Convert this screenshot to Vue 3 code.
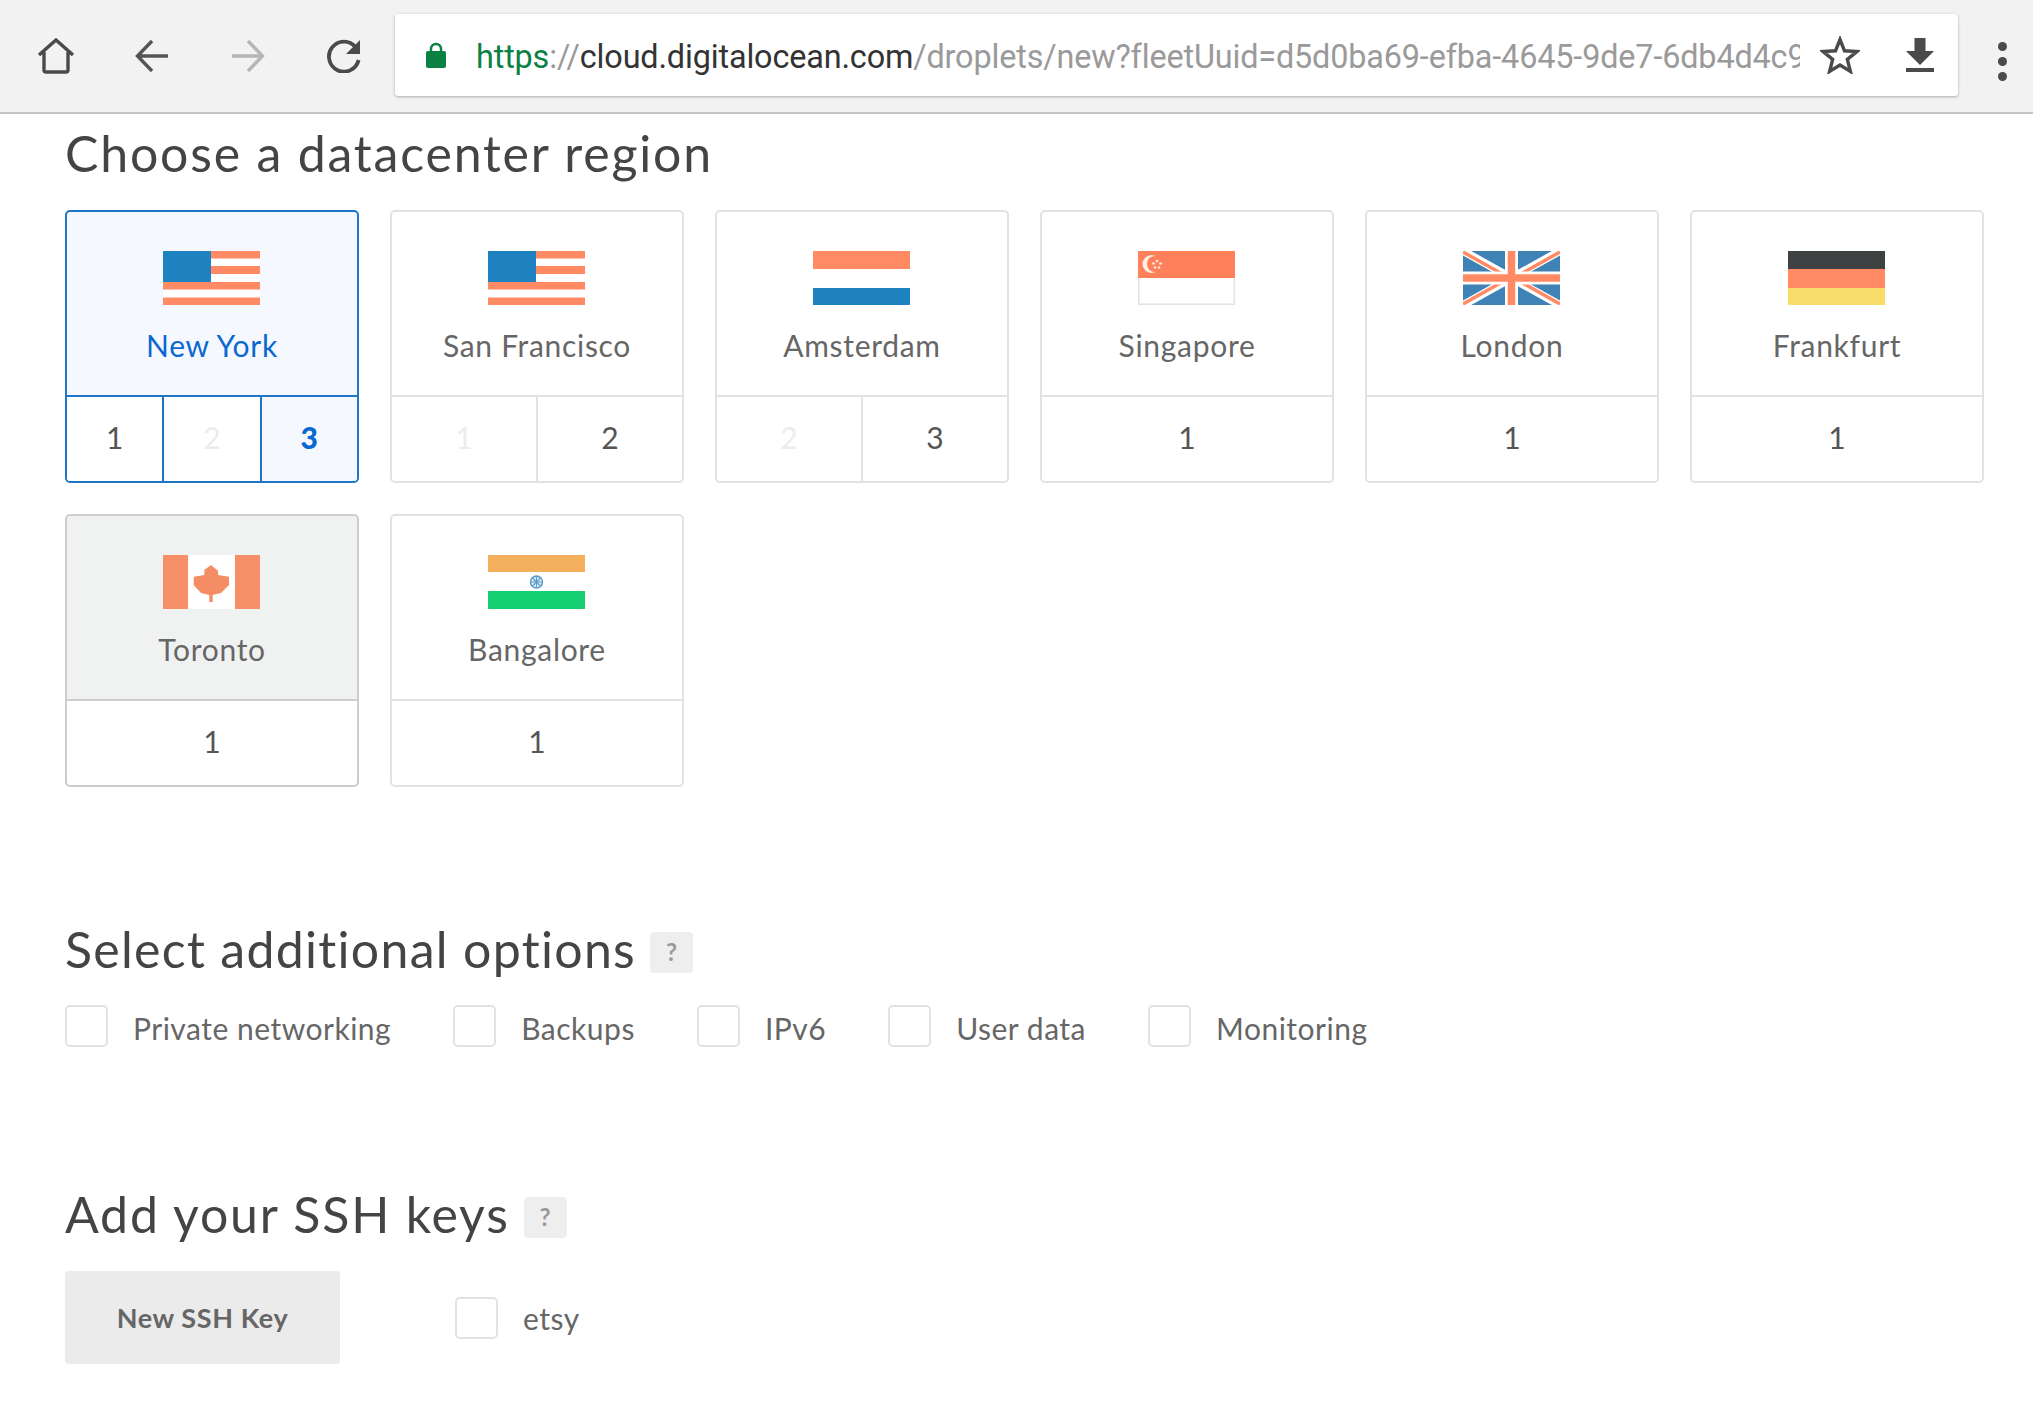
<script setup>
const regions = [
  { name: 'New York', flag: 'us', state: 'selected', cells: [{ n: 1 }, { n: 2, off: true }, { n: 3, on: true }] },
  { name: 'San Francisco', flag: 'us', cells: [{ n: 1, off: true }, { n: 2 }] },
  { name: 'Amsterdam', flag: 'nl', cells: [{ n: 2, off: true }, { n: 3 }] },
  { name: 'Singapore', flag: 'sg', cells: [{ n: 1 }] },
  { name: 'London', flag: 'uk', cells: [{ n: 1 }] },
  { name: 'Frankfurt', flag: 'de', cells: [{ n: 1 }] },
  { name: 'Toronto', flag: 'ca', state: 'hover', cells: [{ n: 1 }] },
  { name: 'Bangalore', flag: 'in', cells: [{ n: 1 }] }
]
const options = ['Private networking', 'Backups', 'IPv6', 'User data', 'Monitoring']
const spokes = [0, 45, 90, 135]
</script>

<template>
  <div class="page">
    <header class="toolbar">
      <button class="tool">
        <svg width="38" height="36" viewBox="0 0 38 36"><path d="M2 17 19 2l17 15M7 14v18a2 2 0 0 0 2 2h20a2 2 0 0 0 2-2V14" fill="none" stroke="#4a4a4a" stroke-width="3.4"/></svg>
      </button>
      <button class="tool">
        <svg width="34" height="34" viewBox="0 0 34 34"><path d="M33 17H4M17 2 2.500 17 17 32" fill="none" stroke="#555" stroke-width="3.4"/></svg>
      </button>
      <button class="tool">
        <svg width="34" height="34" viewBox="0 0 34 34"><path d="M1 17h29M17 2l14.500 15L17 32" fill="none" stroke="#b5b5b5" stroke-width="3.4"/></svg>
      </button>
      <button class="tool">
        <svg width="34" height="34" viewBox="0 0 34 34"><path d="M28.500 8A15 15 0 1 0 31.600 21" fill="none" stroke="#4a4a4a" stroke-width="3.8"/><path d="M33 1v14H19z" fill="#4a4a4a"/></svg>
      </button>
      <div class="omnibox">
        <svg class="lock" width="20" height="26" viewBox="0 0 20 26"><path d="M5 10V7a5 5 0 0 1 10 0v3" fill="none" stroke="#0b8043" stroke-width="2.400"/><rect y="9" width="20" height="17" rx="2" fill="#0b8043"/></svg>
        <div class="url"><span class="scheme">https</span><span class="faint">://</span><span class="host">cloud.digitalocean.com</span><span class="faint">/droplets/new?fleetUuid=d5d0ba69-efba-4645-9de7-6db4d4c9</span></div>
        <svg class="star" width="40" height="38" viewBox="0 0 40 38"><path d="M20 3.500 24.500 14.800l12.300.8-9.500 7.800 3.100 12L20 29l-10.400 6.400 3.100-12-9.500-7.800 12.300-.8z" fill="none" stroke="#4a4a4a" stroke-width="3.400"/></svg>
        <svg class="download" width="28" height="34" viewBox="0 0 28 34"><path d="M8.500 0h11v13H28L14 27 0 13h8.500z" fill="#4a4a4a"/><rect y="30" width="28" height="4" fill="#4a4a4a"/></svg>
      </div>
      <div class="dots"><i></i><i></i><i></i></div>
    </header>

    <main class="content">
      <h2 class="title first">Choose a datacenter region</h2>
      <div class="regions">
        <div v-for="r in regions" :key="r.name" class="card" :class="r.state">
          <div class="head">
            <svg class="flag" width="97" height="54" viewBox="0 0 97 54">
              <template v-if="r.flag === 'us'">
                <rect width="97" height="54" fill="#fff"/>
                <g fill="#ff8a64"><rect width="97" height="7.500"/><rect y="15" width="97" height="8"/><rect y="31" width="97" height="7.500"/><rect y="46.500" width="97" height="7.500"/></g>
                <rect width="48" height="31" fill="#1f82c0"/>
              </template>
              <template v-else-if="r.flag === 'nl'">
                <rect width="97" height="54" fill="#fff"/>
                <rect width="97" height="18" fill="#ff8a64"/>
                <rect y="37" width="97" height="17" fill="#1f82c0"/>
              </template>
              <template v-else-if="r.flag === 'sg'">
                <rect x=".75" y=".75" width="95.500" height="52.500" fill="#fff" stroke="#e2e2de" stroke-width="1.500"/>
                <rect width="97" height="27" fill="#ff8059"/>
                <circle cx="13.500" cy="13" r="9" fill="#fdeee6"/>
                <circle cx="17" cy="13" r="8" fill="#ff8059"/>
                <g fill="#fdeee6"><circle cx="19" cy="10" r="1.300"/><circle cx="22.500" cy="12.500" r="1.300"/><circle cx="21" cy="16.500" r="1.300"/><circle cx="17" cy="16.500" r="1.300"/><circle cx="15.500" cy="12.500" r="1.300"/></g>
              </template>
              <template v-else-if="r.flag === 'uk'">
                <rect width="97" height="54" fill="#3f82b5"/>
                <path d="M0 0 97 54M97 0 0 54" stroke="#fff" stroke-width="8"/>
                <path d="M0 1 42 24.500M97 1 56 24M0 53 41 30M97 53 56 30" stroke="#ff8a64" stroke-width="3.500"/>
                <path d="M48.500 0v54M0 27h97" stroke="#fff" stroke-width="13"/>
                <path d="M48.500 0v54M0 27h97" stroke="#ff8a64" stroke-width="7.500"/>
              </template>
              <template v-else-if="r.flag === 'de'">
                <rect width="97" height="18" fill="#3f4242"/>
                <rect y="18" width="97" height="19" fill="#ff8a64"/>
                <rect y="37" width="97" height="17" fill="#f8dd6a"/>
              </template>
              <template v-else-if="r.flag === 'ca'">
                <rect width="97" height="54" fill="#fff"/>
                <rect width="25" height="54" fill="#f79068"/>
                <rect x="72" width="25" height="54" fill="#f79068"/>
                <path d="M48 10l7 5.700V20l11 1.700V30l-8 8-8.300 2v7h-3.400v-7L38 38l-7.300-8v-8.300L41.300 20v-5z" fill="#f58d64"/>
              </template>
              <template v-else>
                <rect width="97" height="54" fill="#fff"/>
                <rect width="97" height="17" fill="#f4b05c"/>
                <rect y="36" width="97" height="18" fill="#16cf72"/>
                <circle cx="48.500" cy="27" r="6" fill="#dcebf5" stroke="#5b9bc9" stroke-width="1.500"/>
                <g stroke="#5b9bc9" stroke-width="1.200">
                  <path v-for="a in spokes" :key="a" d="M48.500 21.500v11" :transform="`rotate(${a} 48.500 27)`"/>
                </g>
              </template>
            </svg>
            <span class="name">{{ r.name }}</span>
          </div>
          <div class="cells">
            <div v-for="c in r.cells" :key="c.n" class="cell" :class="{ off: c.off, on: c.on }">{{ c.n }}</div>
          </div>
        </div>
      </div>

      <h2 class="title second">Select additional options<span class="help">?</span></h2>
      <div class="options">
        <label v-for="o in options" :key="o" class="option"><span class="box"></span><span class="text">{{ o }}</span></label>
      </div>

      <h2 class="title third">Add your SSH keys<span class="help">?</span></h2>
      <div class="keys">
        <button class="new-key">New SSH Key</button>
        <label class="option"><span class="box"></span><span>etsy</span></label>
      </div>
    </main>
  </div>
</template>

<style>
html, body { margin: 0; background: #fff; }
</style>

<style scoped>
.page { width: 2033px; height: 1408px; overflow: hidden; font-family: Lato, "Noto Sans", sans-serif; color: #666; }
.toolbar { box-sizing: border-box; height: 114px; display: flex; align-items: flex-start; padding: 14px 0 0 8px; background: #f2f2f2; border-bottom: 2px solid #c4c4c4; }
.tool { width: 96px; height: 84px; padding: 0; display: flex; align-items: center; justify-content: center; background: none; border: 0; }
.omnibox { box-sizing: border-box; width: 1563px; height: 82px; margin-left: 3px; padding: 0 24px 0 31px; display: flex; align-items: center; background: #fff; border-radius: 3px; box-shadow: 0 1px 3px rgba(0, 0, 0, .3); }
.lock { flex: none; }
.url { width: 1326px; margin-left: 30px; padding-top: 3px; overflow: hidden; white-space: nowrap; font: 32.400px/44px Roboto, sans-serif; color: #9a9a9a; letter-spacing: -.15px; }
.scheme { color: #0b8043; }
.faint { color: #9a9a9a; }
.host { color: #333; }
.star { flex: none; margin-left: 20px; }
.download { flex: none; margin-left: 46px; }
.dots { display: flex; flex-direction: column; gap: 6px; margin: 28px 0 0 40px; }
.dots i { display: block; width: 9px; height: 9px; border-radius: 50%; background: #4a4a4a; }

.content { padding: 9px 49px 0 65px; }
.title { margin: 0; height: 60px; display: flex; align-items: center; font-size: 50px; line-height: 60px; font-weight: 400; color: #444; letter-spacing: 1.8px; }
.regions { margin-top: 27px; display: grid; grid-template-columns: repeat(6, 294px); gap: 31px; }
.card { box-sizing: border-box; height: 273px; display: flex; flex-direction: column; background: #fff; border: 2px solid #e2e2e2; border-radius: 5px; overflow: hidden; }
.head { box-sizing: border-box; height: 185px; padding-top: 39px; display: flex; flex-direction: column; align-items: center; border-bottom: 2px solid #e2e2e2; }
.flag { display: block; margin-right: 2px; }
.name { margin-top: 20px; font-size: 30px; line-height: 40px; letter-spacing: .7px; }
.cells { flex: 1; display: flex; }
.cell { flex: 1; padding-bottom: 4px; display: flex; align-items: center; justify-content: center; font-size: 30px; color: #555; }
.cell + .cell { border-left: 2px solid #e2e2e2; }
.cell.off { color: #ececec; }
.selected { background: #f5f9ff; border-color: #1f76c6; }
.selected .head { border-color: #1f76c6; }
.selected .name { color: #0a68d0; }
.selected .cell { background: #fff; }
.selected .cell + .cell { border-color: #1f76c6; }
.selected .cell.on { background: #f5f9ff; color: #0a68d0; font-weight: 900; }
.hover { border-color: #cdcdcd; }
.hover .head { background: #f0f1f1; border-color: #cdcdcd; }

.second { margin-top: 132px; letter-spacing: 1.3px; }
.help { box-sizing: border-box; width: 43px; height: 41px; margin: 6px 0 0 14px; display: flex; align-items: center; justify-content: center; background: #eee; border-radius: 4px; font-size: 24px; font-weight: 700; letter-spacing: 0; color: #999; }
.options { margin-top: 26px; display: flex; gap: 62px; }
.option { height: 42px; display: flex; align-items: center; font-size: 30px; line-height: 42px; letter-spacing: .5px; color: #666; white-space: nowrap; }
.text { margin-top: 3px; }
.box { box-sizing: border-box; flex: none; width: 43px; height: 42px; margin-right: 25px; background: #fff; border: 2px solid #e2e2e2; border-radius: 5px; }
.third { margin-top: 137px; }
.keys { margin-top: 27px; display: flex; align-items: center; gap: 115px; }
.new-key { width: 275px; height: 93px; padding: 0; background: #ebebeb; border: 0; border-radius: 4px; font: 700 27px Lato, sans-serif; letter-spacing: .6px; color: #666; }
</style>
